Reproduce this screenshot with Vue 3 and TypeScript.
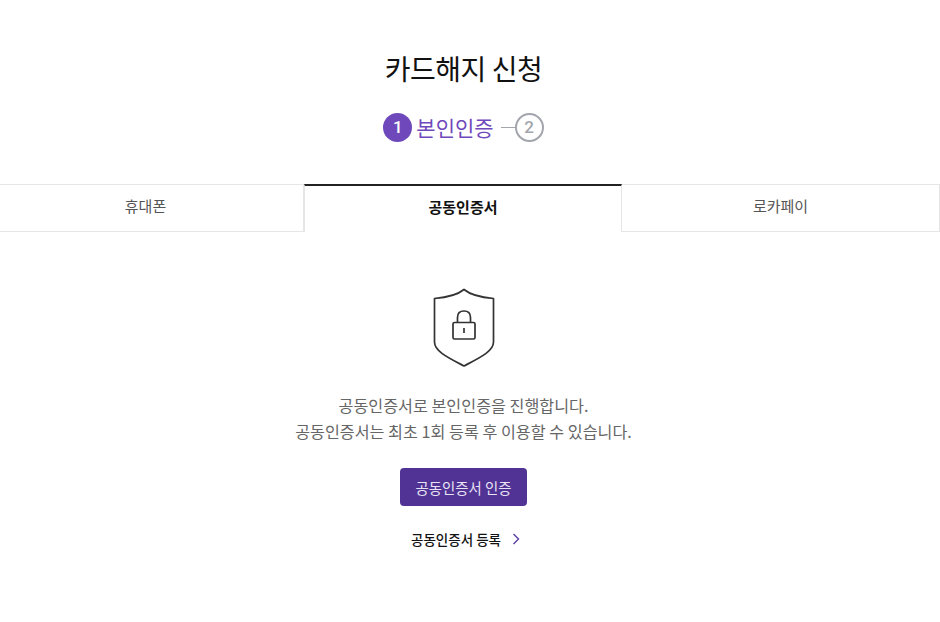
<script setup lang="ts">
const tabs: { label: string; active?: boolean }[] = [
  { label: '휴대폰' },
  { label: '공동인증서', active: true },
  { label: '로카페이' },
]
</script>

<template>
  <div class="page">
    <div class="head">
      <h1 class="title">카드해지 신청</h1>
      <div class="steps">
        <span class="num on">1</span>
        <span class="step-label">본인인증</span>
        <span class="line"></span>
        <span class="num off">2</span>
      </div>
    </div>
    <div class="tabs">
      <div v-for="t in tabs" :key="t.label" class="tab" :class="{ active: t.active }">{{ t.label }}</div>
    </div>
    <div class="body">
      <svg class="shield" width="64" height="82" viewBox="0 0 64 82" fill="none" stroke="#333" stroke-width="1.7">
        <path d="M32 1.500C26 6.500 14 9.500 2.500 10.500V54C2.500 63 15 69 32 78C49 69 61.500 63 61.500 54V10.500C50 9.500 38 6.500 32 1.500Z" stroke-linejoin="round" />
        <rect x="21" y="34.500" width="22" height="16.500" rx="1.500" />
        <path d="M25.500 34.500V29.500C25.500 25.500 28 23 32 23C36 23 38.500 25.500 38.500 29.500V34.500" />
        <path d="M32 40V45" />
      </svg>
      <p class="desc">공동인증서로 본인인증을 진행합니다.<br />공동인증서는 최초 1회 등록 후 이용할 수 있습니다.</p>
      <button class="cta" type="button">공동인증서 인증</button>
      <a class="reg">
        <span>공동인증서 등록</span>
        <svg width="8" height="12" viewBox="0 0 8 12" fill="none" stroke="#5b3fa6" stroke-width="1.400"><path d="M1.500 1L6.500 6L1.500 11" /></svg>
      </a>
    </div>
  </div>
</template>

<style scoped>
.page {
  width: 940px;
  height: 622px;
  overflow: hidden;
  background: #fff;
  font-family: "Noto Sans CJK KR", "Noto Sans", sans-serif;
  display: flex;
  flex-direction: column;
}
.head,
.body {
  width: 927px;
  display: flex;
  flex-direction: column;
  align-items: center;
}
.title {
  margin: 46px 0 0;
  font-size: 28px;
  line-height: 44px;
  font-weight: 400;
  color: #111;
  letter-spacing: -0.5px;
}
.steps {
  margin-top: 22px;
  height: 30px;
  display: flex;
  align-items: center;
}
.num {
  width: 29px;
  height: 29px;
  box-sizing: border-box;
  border-radius: 50%;
  display: flex;
  align-items: center;
  justify-content: center;
  font-family: Roboto, sans-serif;
  font-size: 17px;
  font-weight: 500;
}
.num.on { background: #6f49bb; color: #fff; }
.num.off { border: 2px solid #a3a5ad; color: #a3a5ad; }
.step-label {
  margin-left: 4px;
  font-size: 21px;
  line-height: 30px;
  color: #6f49bb;
}
.line {
  width: 15px;
  height: 1px;
  margin-left: 7px;
  margin-right: -1px;
  background: #a3a5ad;
}
.tabs {
  margin: 42px 0 0 -14px;
  width: 954px;
  display: grid;
  grid-template-columns: 318px 318px 318px;
  height: 48px;
  flex: none;
}
.tab {
  box-sizing: border-box;
  border: 1px solid #e6e6e6;
  border-left: 0;
  padding: 0 0 5px 2px;
  display: flex;
  align-items: center;
  justify-content: center;
  font-size: 15px;
  color: #555;
}
.tab.active {
  border-top: 2px solid #222;
  border-bottom: 0;
  border-left: 1px solid #e6e6e6;
  padding: 0 0 5px;
  color: #111;
  font-weight: 700;
}
.tab.active + .tab { padding-left: 0; }
.shield { margin-top: 56px; }
.desc {
  margin: 22px 0 0;
  font-size: 16.200px;
  line-height: 26px;
  color: #666;
  text-align: center;
}
.cta {
  margin-top: 24px;
  width: 127px;
  height: 38px;
  border: 0;
  border-radius: 4px;
  background: #503394;
  color: #e9e4f5;
  font-family: inherit;
  font-size: 14.400px;
}
.reg {
  margin: 23px 0 0 4px;
  display: flex;
  align-items: center;
  gap: 11px;
  font-size: 13.500px;
  font-weight: 500;
  color: #111;
}
</style>
